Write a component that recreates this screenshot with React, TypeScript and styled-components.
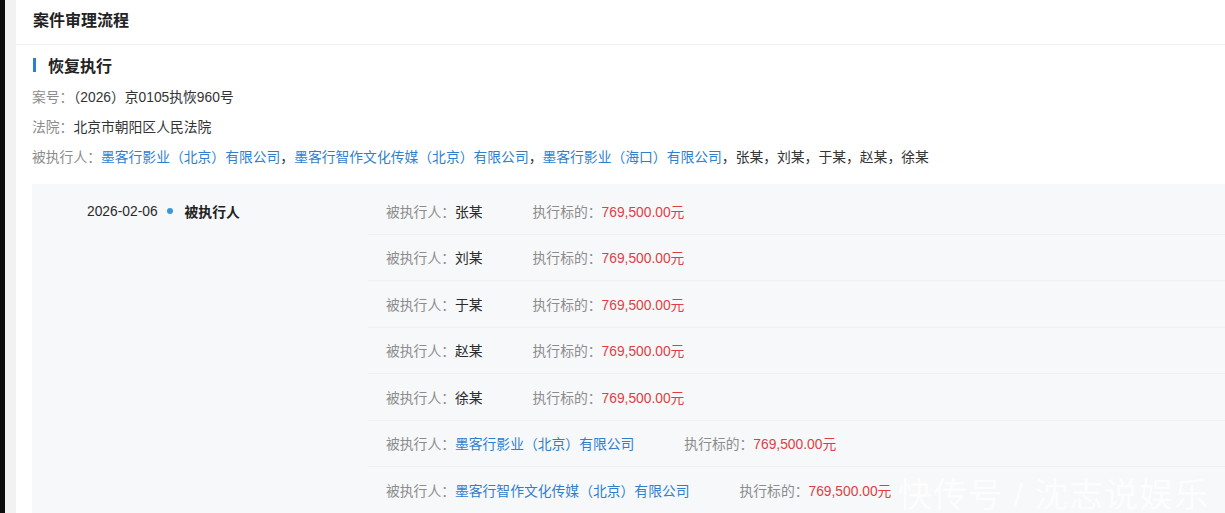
import React from 'react';
import styled, { createGlobalStyle } from 'styled-components';

const GlobalStyle = createGlobalStyle`
  html, body {
    margin: 0;
    padding: 0;
    background: #f2f2f3;
    overflow: hidden;
  }
  body {
    font-family: "Liberation Sans", "Noto Sans CJK SC", sans-serif;
    color: #333;
  }
`;

const Page = styled.div`
  display: flex;
  min-height: 513px;
  border-left: 5px solid #0c0c0c;
  padding-left: 11px;
  position: relative;
`;

const Card = styled.div`
  flex: 1;
  background: #fff;
  min-height: 513px;
`;

const Header = styled.div`
  height: 44px;
  line-height: 41px;
  padding-left: 17px;
  font-size: 16px;
  font-weight: bold;
  color: #222;
  border-bottom: 1px solid #f0f0f1;
`;

const Section = styled.div`
  padding: 10px 0 0 16px;
`;

const SectionTitle = styled.div`
  display: flex;
  align-items: center;
  height: 20px;
  font-size: 16px;
  font-weight: bold;
  color: #222;
  margin-bottom: 8px;

  &::before {
    content: '';
    width: 3px;
    height: 14px;
    background: #2f7fcf;
    margin: 0 12px 0 1px;
  }
`;

const InfoLine = styled.div`
  font-size: 13.8px;
  line-height: 30px;
  color: #333;
  white-space: nowrap;
`;

const Label = styled.span`
  color: #8c8c8c;
`;

const Link = styled.span`
  color: #2f7fcf;
`;

const Timeline = styled.div`
  margin-top: 11px;
  background: #f7f8fa;
  display: flex;
  padding-top: 4px;
`;

const DateCol = styled.div`
  width: 281px;
  flex-shrink: 0;
  padding-left: 55px;
  height: 46px;
  display: flex;
  align-items: center;
  font-size: 13.8px;
`;

const DateText = styled.span`
  color: #2a2a2a;
  font-weight: 500;
`;

const Dot = styled.span`
  width: 6px;
  height: 6px;
  border-radius: 50%;
  background: #3a97de;
  margin: 0 12px 0 9px;
`;

const EventName = styled.span`
  font-weight: bold;
  color: #222;
`;

const Rows = styled.div`
  flex: 1;
`;

const Row = styled.div`
  height: 46.5px;
  box-sizing: border-box;
  display: flex;
  align-items: center;
  padding-left: 18px;
  font-size: 13.8px;
  white-space: nowrap;
  border-bottom: 1px solid #f0f1f3;
`;

const Party = styled.span<{ $company?: boolean }>`
  color: ${p => (p.$company ? '#2f7fcf' : '#2a2a2a')};
  margin-right: 50px;
`;

const Amount = styled.span`
  color: #de3f45;
`;

const Watermark = styled.div`
  position: absolute;
  left: 893px;
  top: 468px;
  font-size: 34px;
  color: rgba(255, 255, 255, 0.75);
  letter-spacing: 1px;
  white-space: nowrap;
  pointer-events: none;
`;

interface Debtor {
  name: string;
  company?: boolean;
}

const debtors: Debtor[] = [
  { name: '张某' },
  { name: '刘某' },
  { name: '于某' },
  { name: '赵某' },
  { name: '徐某' },
  { name: '墨客行影业（北京）有限公司', company: true },
  { name: '墨客行智作文化传媒（北京）有限公司', company: true },
];

const App: React.FC = () => {
  return (
    <>
      <GlobalStyle />
      <Page>
        <Card>
          <Header>案件审理流程</Header>
          <Section>
            <SectionTitle>恢复执行</SectionTitle>
            <InfoLine>
              <Label>案号：</Label>（2026）京0105执恢960号
            </InfoLine>
            <InfoLine>
              <Label>法院：</Label>北京市朝阳区人民法院
            </InfoLine>
            <InfoLine>
              <Label>被执行人：</Label>
              <Link>墨客行影业（北京）有限公司</Link>，
              <Link>墨客行智作文化传媒（北京）有限公司</Link>，
              <Link>墨客行影业（海口）有限公司</Link>，张某，刘某，于某，赵某，徐某
            </InfoLine>
            <Timeline>
              <DateCol>
                <DateText>2026-02-06</DateText>
                <Dot />
                <EventName>被执行人</EventName>
              </DateCol>
              <Rows>
                {debtors.map(d => (
                  <Row key={d.name}>
                    <Label>被执行人：</Label>
                    <Party $company={d.company}>{d.name}</Party>
                    <Label>执行标的：</Label>
                    <Amount>769,500.00元</Amount>
                  </Row>
                ))}
              </Rows>
            </Timeline>
          </Section>
        </Card>
        <Watermark>快传号 / 沈志说娱乐</Watermark>
      </Page>
    </>
  );
};

export default App;
